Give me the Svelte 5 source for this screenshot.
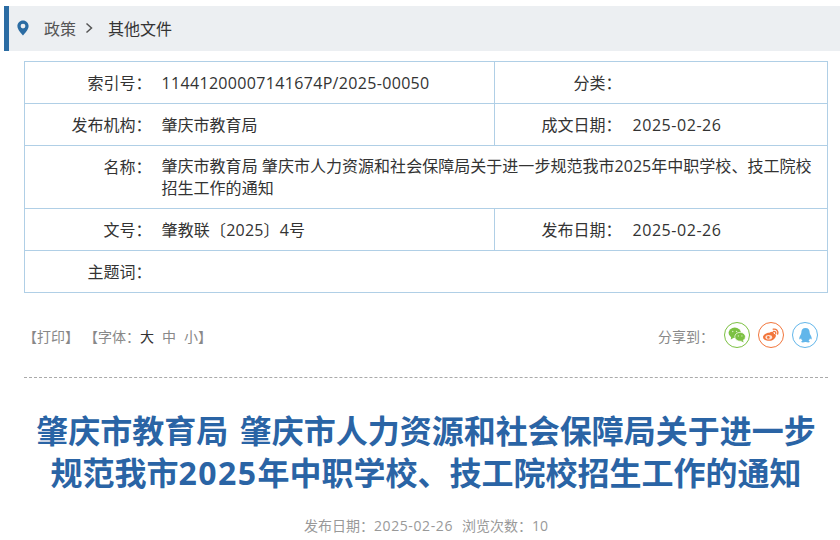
<script lang="ts">
  const meta = [
    { label: '索引号：', value: '11441200007141674P/2025-00050', label2: '分类：', value2: '', cls: 'num' },
    { label: '发布机构：', value: '肇庆市教育局', label2: '成文日期：', value2: '2025-02-26' },
    { label: '名称：', value: '肇庆市教育局 肇庆市人力资源和社会保障局关于进一步规范我市2025年中职学校、技工院校招生工作的通知', wide: true, cls: 'long' },
    { label: '文号：', value: '肇教联〔2025〕4号', label2: '发布日期：', value2: '2025-02-26', cls: 'code' },
    { label: '主题词：', value: '', wide: true }
  ];
</script>

<div class="page">
  <div class="crumb">
    <svg class="pin" width="12" height="16" viewBox="0 0 12 16">
      <path fill-rule="evenodd" fill="#2b6ca3" d="M6 .5C2.800.5.400 3 .400 6c0 3.800 4.200 7.800 5.600 9.500C7.400 13.800 11.600 9.800 11.600 6 11.600 3 9.200.5 6 .5zM6 3.700a2.400 2.400 0 1 1 0 4.800 2.400 2.400 0 0 1 0-4.800z" />
    </svg>
    <span class="link">政策</span>
    <svg class="chev" width="9" height="12" viewBox="0 0 9 12">
      <path d="M1.500 1.500 6.500 6l-5 4.500" fill="none" stroke="#555" stroke-width="1.500" />
    </svg>
    <span class="current">其他文件</span>
  </div>

  <table class="meta">
    <colgroup>
      <col class="c1" /><col class="c2" /><col class="c3" /><col />
    </colgroup>
    <tbody>
      {#each meta as row}
        <tr class:tall={row.cls === 'long'}>
          <th>{row.label}</th>
          {#if row.wide}
            <td colspan="3" class={row.cls}>{row.value}</td>
          {:else}
            <td class={row.cls}>{row.value}</td>
            <th class="mid">{row.label2}</th>
            <td class="date">{row.value2}</td>
          {/if}
        </tr>
      {/each}
    </tbody>
  </table>

  <div class="tools">
    <div class="left">
      <span>【打印】</span>
      <span class="font">【字体：<b>大</b><i>中</i><i>小</i>】</span>
    </div>
    <div class="share">
      <span class="share-label">分享到：</span>
      <span class="icon wx">
        <svg width="18" height="16" viewBox="0 0 20 18">
          <ellipse cx="7.500" cy="6.500" rx="7" ry="5.800" fill="#7cc142" />
          <path d="M3.500 10.500 3 14l3.500-2z" fill="#7cc142" />
          <ellipse cx="13.500" cy="11" rx="6" ry="5" fill="#7cc142" stroke="#fff" stroke-width=".8" />
          <path d="M16.500 14.500 17.500 17.500l-3.500-2z" fill="#7cc142" />
          <circle cx="5.200" cy="5" r=".8" fill="#d9efc4" />
          <circle cx="9.500" cy="5" r=".8" fill="#d9efc4" />
          <circle cx="11.500" cy="10" r=".7" fill="#d9efc4" />
          <circle cx="15.500" cy="10" r=".7" fill="#d9efc4" />
        </svg>
      </span>
      <span class="icon wb">
        <svg width="18" height="16" viewBox="0 0 20 18">
          <path d="M8 6.500C11 4.500 13.500 4.800 13.200 7.500 15.500 7.800 16.200 9.500 15 11.500 13.500 14.500 10 16 6.500 15.500 3 15 1 13.500 1 11.200 1 9.500 4 6.500 8 6.500z" fill="#f2763c" />
          <ellipse cx="7.500" cy="11.500" rx="3.800" ry="2.600" fill="#fde3d6" />
          <circle cx="7" cy="11.700" r="1.500" fill="#f2763c" />
          <path d="M12.500 2.500c3.500-.8 6 2 5 5.500M12.800 5c1.800-.4 3 1 2.500 2.600" fill="none" stroke="#f2763c" stroke-width="1.500" stroke-linecap="round" />
        </svg>
      </span>
      <span class="icon qq">
        <svg width="15" height="17" viewBox="0 0 18 20">
          <path d="M9 1C5.500 1 4 3.500 4 6.500c0 1-.2 1.500-.8 2.500C2 11 1 13.500 1.800 14.500c.5.500 1.200-.3 1.800-1.300.3 1.300 1 2.300 1.800 3-1.200.5-1.800 1-1.500 1.700.4.800 3 .800 4.600 0h1c1.600.8 4.200.8 4.600 0 .3-.7-.3-1.200-1.500-1.700.8-.7 1.500-1.700 1.800-3 .6 1 1.300 1.800 1.800 1.300C17 13.500 16 11 14.800 9c-.6-1-.8-1.500-.8-2.500C14 3.500 12.500 1 9 1z" fill="#62b6ea" />
        </svg>
      </span>
    </div>
  </div>

  <h1>肇庆市教育局 肇庆市人力资源和社会保障局关于进一步规范我市<span class="year">2025</span>年中职学校、技工院校招生工作的通知</h1>

  <div class="info">
    <span>发布日期：<span class="info-date">2025-02-26</span></span>
    <span>浏览次数：10</span>
  </div>
</div>

<style>
  :global(body) {
    margin: 0;
    background: #fff;
    font-family: "Open Sans", "Noto Sans CJK SC", sans-serif;
  }
  .page {
    padding-top: 6px;
    height: 534px;
    overflow: hidden;
  }
  .crumb {
    margin-left: 4px;
    height: 45px;
    padding-bottom: 2px;
    box-sizing: border-box;
    display: flex;
    align-items: center;
    background: #eceff2;
    border-left: 5px solid #2b6ca3;
    font-size: 16px;
    color: #555;
  }
  .pin { margin-left: 8px; }
  .link { margin-left: 15px; }
  .chev { margin-left: 9px; }
  .current { margin-left: 14px; color: #333; }
  .meta {
    margin: 10px 0 0 24px;
    width: 804px;
    border-collapse: collapse;
    table-layout: fixed;
    font-size: 16px;
    color: #333;
  }
  .c1 { width: 128px; }
  .c2 { width: 342px; }
  .c3 { width: 128px; }
  .meta th, .meta td {
    border: 1px solid #b0cfe6;
    height: 41px;
    padding: 0 9px;
    line-height: 22px;
    font-weight: normal;
  }
  .meta th {
    text-align: right;
    padding-right: 1px;
    border-right: none;
  }
  .meta td:nth-child(2), .meta td:last-child {
    border-left: none;
  }
  .meta td.num { letter-spacing: .33px; }
  .meta td.code { letter-spacing: .18px; }
  .meta td.long { letter-spacing: .03px; }
  .meta td.date { letter-spacing: .55px; padding-left: 10px; }
  .meta .tall td { height: 62px; }
  .meta .tall th { height: 52px; vertical-align: top; padding-top: 10px; }
  .tools {
    margin: 0 12px 0 24px;
    height: 84px;
    display: flex;
    align-items: center;
    justify-content: space-between;
    border-bottom: 1px dashed #aaa;
    font-size: 14px;
    color: #888;
  }
  .left { display: flex; gap: 5px; margin-left: -1px; padding-top: 2px; }
  .font b { font-weight: normal; color: #333; margin-right: 8px; }
  .font i { font-style: normal; margin-right: 8px; }
  .font i:last-child { margin-right: 0; }
  .share { display: flex; align-items: center; margin-right: 10px; }
  .share-label { margin-right: 2px; padding-top: 1px; }
  .icon {
    width: 26px;
    height: 26px;
    box-sizing: border-box;
    border-radius: 50%;
    border: 1px solid;
    display: flex;
    align-items: center;
    justify-content: center;
    margin-left: 8px;
  }
  .wx { border-color: #7cc142; }
  .wb { border-color: #f2763c; }
  .qq { border-color: #62b6ea; }
  h1 {
    margin: 32px 12px 0 24px;
    text-align: center;
    font-size: 32px;
    line-height: 42px;
    font-weight: bold;
    color: #2a64a5;
    word-spacing: 3px;
  }
  .year { letter-spacing: 1.500px; }
  .info {
    margin: 21px 12px 0 24px;
    display: flex;
    justify-content: center;
    gap: 9px;
    font-size: 14px;
    color: #999;
  }
  .info-date { letter-spacing: .6px; }
</style>
